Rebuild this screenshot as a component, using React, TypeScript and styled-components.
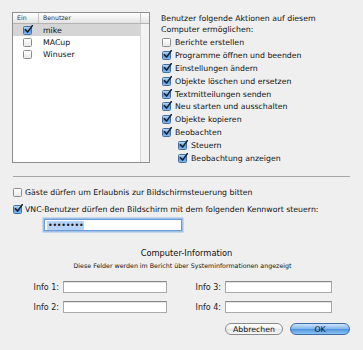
import styled, { createGlobalStyle } from 'styled-components';

const GlobalStyle = createGlobalStyle`
  html, body {
    margin: 0;
    padding: 0;
    background: #efefef;
  }
`;

const USERS = [
  { name: 'mike', on: true, selected: true },
  { name: 'MACup', on: false, selected: false },
  { name: 'Winuser', on: false, selected: false },
];

const ACTIONS: { label: string; on: boolean; sub?: boolean }[] = [
  { label: 'Berichte erstellen', on: false },
  { label: 'Programme öffnen und beenden', on: true },
  { label: 'Einstellungen ändern', on: true },
  { label: 'Objekte löschen und ersetzen', on: true },
  { label: 'Textmitteilungen senden', on: true },
  { label: 'Neu starten und ausschalten', on: true },
  { label: 'Objekte kopieren', on: true },
  { label: 'Beobachten', on: true },
  { label: 'Steuern', on: true, sub: true },
  { label: 'Beobachtung anzeigen', on: true, sub: true },
];

const Check = ({ checked }: { checked: boolean }) => (
  <Box $checked={checked}>
    {checked && (
      <CheckMark viewBox="0 0 10 10">
        <path d="M1.6 5.2 L4 7.9 L9.4 0.6" fill="none" stroke="#16202c" strokeWidth="1.7" strokeLinecap="round" strokeLinejoin="round" />
      </CheckMark>
    )}
  </Box>
);

const App = (): JSX.Element => {
  return (
    <Sheet>
      <GlobalStyle />
      <Top>
        <Table>
          <HeaderRow>
            <HeadCell $w={26}>Ein</HeadCell>
            <HeadCell $grow>Benutzer</HeadCell>
            <ScrollHead />
          </HeaderRow>
          <TableBody>
            <Rows>
              {USERS.map((u) => (
                <UserRow key={u.name} $selected={u.selected}>
                  <CheckCell>
                    <Check checked={u.on} />
                  </CheckCell>
                  <span>{u.name}</span>
                </UserRow>
              ))}
            </Rows>
            <ScrollStrip />
          </TableBody>
        </Table>
        <Actions>
          <Heading>
            Benutzer folgende Aktionen auf diesem
            <br />
            Computer ermöglichen:
          </Heading>
          {ACTIONS.map((a) => (
            <ActionRow key={a.label} $sub={a.sub}>
              <Check checked={a.on} />
              <span>{a.label}</span>
            </ActionRow>
          ))}
        </Actions>
      </Top>
      <Divider />
      <Options>
        <OptionRow>
          <Check checked={false} />
          <span>Gäste dürfen um Erlaubnis zur Bildschirmsteuerung bitten</span>
        </OptionRow>
        <OptionRow>
          <Check checked />
          <span>VNC-Benutzer dürfen den Bildschirm mit dem folgenden Kennwort steuern:</span>
        </OptionRow>
        <PasswordField>
          <Selected>••••••••</Selected>
        </PasswordField>
      </Options>
      <InfoTitle>Computer-Information</InfoTitle>
      <InfoSub>Diese Felder werden im Bericht über Systeminformationen angezeigt</InfoSub>
      <InfoGrid>
        <FieldLabel>Info 1:</FieldLabel>
        <TextField />
        <FieldLabel>Info 3:</FieldLabel>
        <TextField />
        <FieldLabel>Info 2:</FieldLabel>
        <TextField />
        <FieldLabel>Info 4:</FieldLabel>
        <TextField />
      </InfoGrid>
      <Buttons>
        <Button>Abbrechen</Button>
        <Button $primary>OK</Button>
      </Buttons>
    </Sheet>
  );
};

export default App;

const Sheet = styled.div`
  width: 363px;
  height: 350px;
  overflow: hidden;
  background: #efefef;
  font-family: 'DejaVu Sans', 'Liberation Sans', sans-serif;
  font-size: 7.8px;
  color: #111;
  display: flex;
  flex-direction: column;
`;

const Top = styled.div`
  display: flex;
  padding: 12px 0 0 12px;
  height: 153px;
`;

const Table = styled.div`
  width: 136px;
  height: 149px;
  border: 1px solid #8f8f8f;
  background: #fff;
  display: flex;
  flex-direction: column;
`;

const HeaderRow = styled.div`
  display: flex;
  height: 10px;
  background: linear-gradient(#ffffff, #e4e4e4);
  border-bottom: 1px solid #b4b4b4;
  font-size: 6.2px;
  color: #333;
`;

const HeadCell = styled.div<{ $w?: number; $grow?: boolean }>`
  ${({ $w }) => ($w ? `width: ${$w}px;` : '')}
  ${({ $grow }) => ($grow ? 'flex: 1;' : '')}
  display: flex;
  align-items: center;
  padding-left: 4px;
  box-sizing: border-box;
  border-right: 1px solid #c4c4c4;
  line-height: 10px;
`;

const ScrollHead = styled.div`
  width: 8px;
`;

const TableBody = styled.div`
  flex: 1;
  display: flex;
`;

const Rows = styled.div`
  flex: 1;
`;

const UserRow = styled.div<{ $selected?: boolean }>`
  display: flex;
  align-items: center;
  height: 12px;
  background: ${({ $selected }) => ($selected ? '#d5d5d5' : 'transparent')};
`;

const CheckCell = styled.div`
  width: 26px;
  display: flex;
  justify-content: center;
  padding-left: 2px;
  box-sizing: border-box;
  margin-right: 4px;
`;

const ScrollStrip = styled.div`
  width: 8px;
  background: #f3f3f3;
  border-left: 1px solid #d6d6d6;
`;

const Actions = styled.div`
  margin-left: 11px;
  display: flex;
  flex-direction: column;
`;

const Heading = styled.div`
  line-height: 11px;
  margin-top: 1px;
  margin-bottom: 1px;
`;

const ActionRow = styled.div<{ $sub?: boolean }>`
  display: flex;
  align-items: center;
  gap: 4px;
  height: 13.3px;
  padding-left: ${({ $sub }) => ($sub ? '17px' : '1px')};
`;

const Box = styled.span<{ $checked: boolean }>`
  position: relative;
  flex: none;
  width: 7px;
  height: 7px;
  border-radius: 1.5px;
  border: 1px solid ${({ $checked }) => ($checked ? '#44709f' : '#8c8c8c')};
  background: ${({ $checked }) =>
    $checked
      ? 'linear-gradient(#b9d8f6, #5c9ae0 55%, #82b7ef)'
      : 'linear-gradient(#ffffff, #e9e9e9)'};
`;

const CheckMark = styled.svg`
  position: absolute;
  left: 0px;
  top: -2px;
  width: 9px;
  height: 9px;
`;

const Divider = styled.div`
  height: 1px;
  margin: 11px 13px 0 13px;
  background: #a6a6a6;
`;

const Options = styled.div`
  display: flex;
  flex-direction: column;
  gap: 4px;
  padding: 9px 0 0 13px;
`;

const OptionRow = styled.div`
  display: flex;
  align-items: center;
  gap: 3px;
  height: 13px;
`;

const PasswordField = styled.div`
  margin: -1px 0 0 31px;
  width: 134px;
  height: 10px;
  background: #fff;
  border: 1px solid #6f9bd3;
  box-shadow: 0 0 0 1.5px #9ec0ea;
  display: flex;
  align-items: center;
  padding-left: 2px;
`;

const Selected = styled.span`
  background: #b6d4fb;
  color: #1a1a1a;
  font-size: 8px;
  line-height: 9px;
  padding: 0 1px;
  letter-spacing: -0.3px;
`;

const InfoTitle = styled.div`
  margin-top: 17px;
  text-align: center;
  font-size: 8.3px;
  line-height: 11px;
  padding-left: 10px;
`;

const InfoSub = styled.div`
  margin-top: 2px;
  text-align: center;
  font-size: 6.3px;
  line-height: 10px;
  padding-left: 2px;
`;

const InfoGrid = styled.div`
  display: grid;
  grid-template-columns: 51px 104px 58px 107px;
  grid-auto-rows: 12px;
  row-gap: 8px;
  margin: 10px 0 0 12px;
`;

const FieldLabel = styled.div`
  display: flex;
  align-items: center;
  justify-content: flex-end;
  padding-right: 4px;
  font-size: 8px;
  color: #222;
`;

const TextField = styled.div`
  box-sizing: border-box;
  background: #fff;
  border: 1px solid #a9a9a9;
  border-top-color: #8a8a8a;
  box-shadow: inset 0 1px 0 #e2e2e2;
`;

const Buttons = styled.div`
  display: flex;
  justify-content: flex-end;
  gap: 7px;
  margin: 10px 13px 0 0;
`;

const Button = styled.div<{ $primary?: boolean }>`
  box-sizing: border-box;
  width: ${({ $primary }) => ($primary ? '60px' : '58px')};
  height: 12px;
  border-radius: 6px;
  display: flex;
  align-items: center;
  justify-content: center;
  font-size: 7.8px;
  color: #111;
  border: 1px solid ${({ $primary }) => ($primary ? '#3d6ea8' : '#8a8a8a')};
  background: ${({ $primary }) =>
    $primary
      ? 'linear-gradient(#cfe4fa, #86b9ee 45%, #4f93de 52%, #8cc3f4)'
      : 'linear-gradient(#ffffff, #f2f2f2 45%, #e3e3e3 52%, #f7f7f7)'};
`;
